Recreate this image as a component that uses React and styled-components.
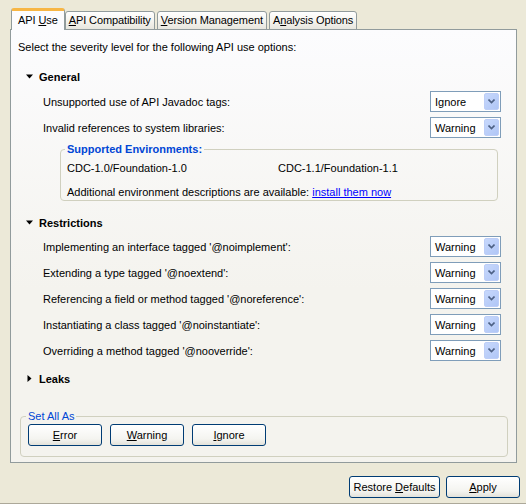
import React from 'react';
import styled, { createGlobalStyle } from 'styled-components';

const Global = createGlobalStyle`
  body {
    margin: 0;
    background: #ece9d8;
    font-family: Tahoma, "Liberation Sans", Arial, sans-serif;
    font-size: 11px;
    color: #000;
  }
`;

const Page = styled.div`
  width: 526px;
  height: 504px;
  box-sizing: border-box;
  padding: 8px 6px 0 10px;
  border-bottom: 1px solid #aca899;
  display: flex;
  flex-direction: column;
`;

const TabBar = styled.div`
  display: flex;
  align-items: flex-start;
  height: 22px;
  padding-left: 1px;
  margin-bottom: -1px;
  position: relative;
  z-index: 1;
`;

const Tab = styled.div`
  box-sizing: border-box;
  height: ${p => (p.$active ? 22 : 19)}px;
  margin-top: ${p => (p.$active ? 0 : 3)}px;
  padding: 0 ${p => (p.$active ? 6 : 3)}px;
  margin-right: ${p => (p.$active ? 0 : 2)}px;
  display: flex;
  align-items: center;
  line-height: 13px;
  white-space: pre;
  letter-spacing: -0.1px;
  border: 1px solid #919b9c;
  border-bottom: ${p => (p.$active ? 'none' : '1px solid #919b9c')};
  border-radius: 3px 3px 0 0;
  background: ${p => (p.$active ? '#fcfcfe' : 'linear-gradient(#ffffff, #f3f2ec 60%, #e7e6de)')};
  border-top: ${p => (p.$active ? '3px solid #f7b645' : '1px solid #919b9c')};
`;

const Panel = styled.div`
  width: 507px;
  height: 434px;
  box-sizing: border-box;
  border: 1px solid #919b9c;
  background: linear-gradient(#fcfcfe, #f4f3ee 60%, #f4f3ee);
  padding: 11px 0 0 0;
  display: flex;
  flex-direction: column;
`;

const Text = styled.div`
  line-height: 13px;
  padding-left: ${p => p.$indent ?? 7}px;
  margin-top: ${p => p.$top || 0}px;
`;

const Section = styled.div`
  display: flex;
  align-items: center;
  gap: 6px;
  height: 13px;
  margin-top: ${p => p.$top || 0}px;
  padding-left: 15px;
  font-weight: bold;
`;

const Twisty = styled.svg`
  width: 7px;
  height: 7px;
  display: block;
`;

const Row = styled.div`
  display: flex;
  align-items: center;
  justify-content: space-between;
  height: 21px;
  margin-top: ${p => p.$top || 5}px;
  padding-left: 32px;
  padding-right: 15px;
`;

const Combo = styled.div`
  box-sizing: border-box;
  width: 71px;
  height: 21px;
  border: 1px solid #7f9db9;
  background: #fff;
  display: flex;
  align-items: center;
  justify-content: space-between;
  padding: 1px;
  padding-left: 4px;
`;

const DropBtn = styled.div`
  width: 15px;
  height: 17px;
  border-radius: 2px;
  background: linear-gradient(135deg, #c7d8fc, #b0c6f6);
  border: 1px solid #bdcef7;
  box-sizing: border-box;
  display: flex;
  align-items: center;
  justify-content: center;
`;

const Group = styled.fieldset`
  margin: ${p => p.$margin};
  padding: ${p => p.$padding};
  border: 1px solid #d0d0bf;
  border-radius: 4px;
  min-width: 0;
  height: ${p => p.$height}px;
  box-sizing: border-box;
`;

const Legend = styled.legend`
  color: #0046d5;
  font-weight: ${p => (p.$bold ? 'bold' : 'normal')};
  padding: 0 2px;
  margin-left: -2px;
  line-height: 13px;
`;

const EnvGrid = styled.div`
  display: grid;
  grid-template-columns: 211px auto;
  line-height: 13px;
`;

const Link = styled.a`
  color: #0000ff;
  text-decoration: underline;
`;

const ButtonRow = styled.div`
  display: flex;
  gap: ${p => p.$gap || 8}px;
  justify-content: ${p => (p.$end ? 'flex-end' : 'flex-start')};
  margin-top: ${p => p.$top || 0}px;
`;

const Button = styled.button`
  box-sizing: border-box;
  width: ${p => p.$w || 74}px;
  height: 22px;
  font: inherit;
  color: #000;
  border: 1px solid #003c74;
  border-radius: 3px;
  background: linear-gradient(#ffffff, #f4f4f0 70%, #e3e2da);
  padding: 0;
  line-height: 13px;
`;

const Chevron = () => (
  <svg width="7" height="5" viewBox="0 0 7 5">
    <path d="M0.5 0.5 L3.5 3.5 L6.5 0.5" fill="none" stroke="#4d6185" strokeWidth="1.6" />
  </svg>
);

const Select = ({ value }) => (
  <Combo>
    <span>{value}</span>
    <DropBtn><Chevron /></DropBtn>
  </Combo>
);

const Down = () => (
  <Twisty viewBox="0 0 7 7"><path d="M0 1.5 H7 L3.5 5.5 Z" fill="#000" /></Twisty>
);
const Right = () => (
  <Twisty viewBox="0 0 7 7"><path d="M1.5 0 V7 L5.5 3.5 Z" fill="#000" /></Twisty>
);

const restrictions = [
  "Implementing an interface tagged '@noimplement':",
  "Extending a type tagged '@noextend':",
  "Referencing a field or method tagged '@noreference':",
  "Instantiating a class tagged '@noinstantiate':",
  "Overriding a method tagged '@nooverride':",
];

export default function App() {
  return (
    <Page>
      <Global />
      <TabBar>
        <Tab $active><span>API <u>U</u>se</span></Tab>
        <Tab><span><u>A</u>PI Compatibility</span></Tab>
        <Tab><span><u>V</u>ersion Management</span></Tab>
        <Tab><span>A<u>n</u>alysis Options</span></Tab>
      </TabBar>
      <Panel>
        <Text>Select the severity level for the following API use options:</Text>
        <Section $top={16}><Down />General</Section>
        <Row $top={8}>
          <span>Unsupported use of API Javadoc tags:</span>
          <Select value="Ignore" />
        </Row>
        <Row>
          <span>Invalid references to system libraries:</span>
          <Select value="Warning" />
        </Row>
        <Group $margin="5px 18px 0 49px" $padding="6px 6px 0 6px" $height={58}>
          <Legend $bold>Supported Environments:</Legend>
          <EnvGrid>
            <span>CDC-1.0/Foundation-1.0</span>
            <span>CDC-1.1/Foundation-1.1</span>
          </EnvGrid>
          <Text $indent={0} $top={11}>
            Additional environment descriptions are available: <Link href="#">install them now</Link>
          </Text>
        </Group>
        <Section $top={15}><Down />Restrictions</Section>
        <Row $top={7}>
          <span>{restrictions[0]}</span>
          <Select value="Warning" />
        </Row>
        {restrictions.slice(1).map(r => (
          <Row key={r}>
            <span>{r}</span>
            <Select value="Warning" />
          </Row>
        ))}
        <Section $top={11}><Right />Leaks</Section>
        <Group $margin="25px 8px 0 9px" $padding="1px 7px 0 7px" $height={47}>
          <Legend>Set All As</Legend>
          <ButtonRow>
            <Button><u>E</u>rror</Button>
            <Button><u>W</u>arning</Button>
            <Button><u>I</u>gnore</Button>
          </ButtonRow>
        </Group>
      </Panel>
      <ButtonRow $end $top={13} $gap={6}>
        <Button $w={91}>Restore <u>D</u>efaults</Button>
        <Button><u>A</u>pply</Button>
      </ButtonRow>
    </Page>
  );
}
